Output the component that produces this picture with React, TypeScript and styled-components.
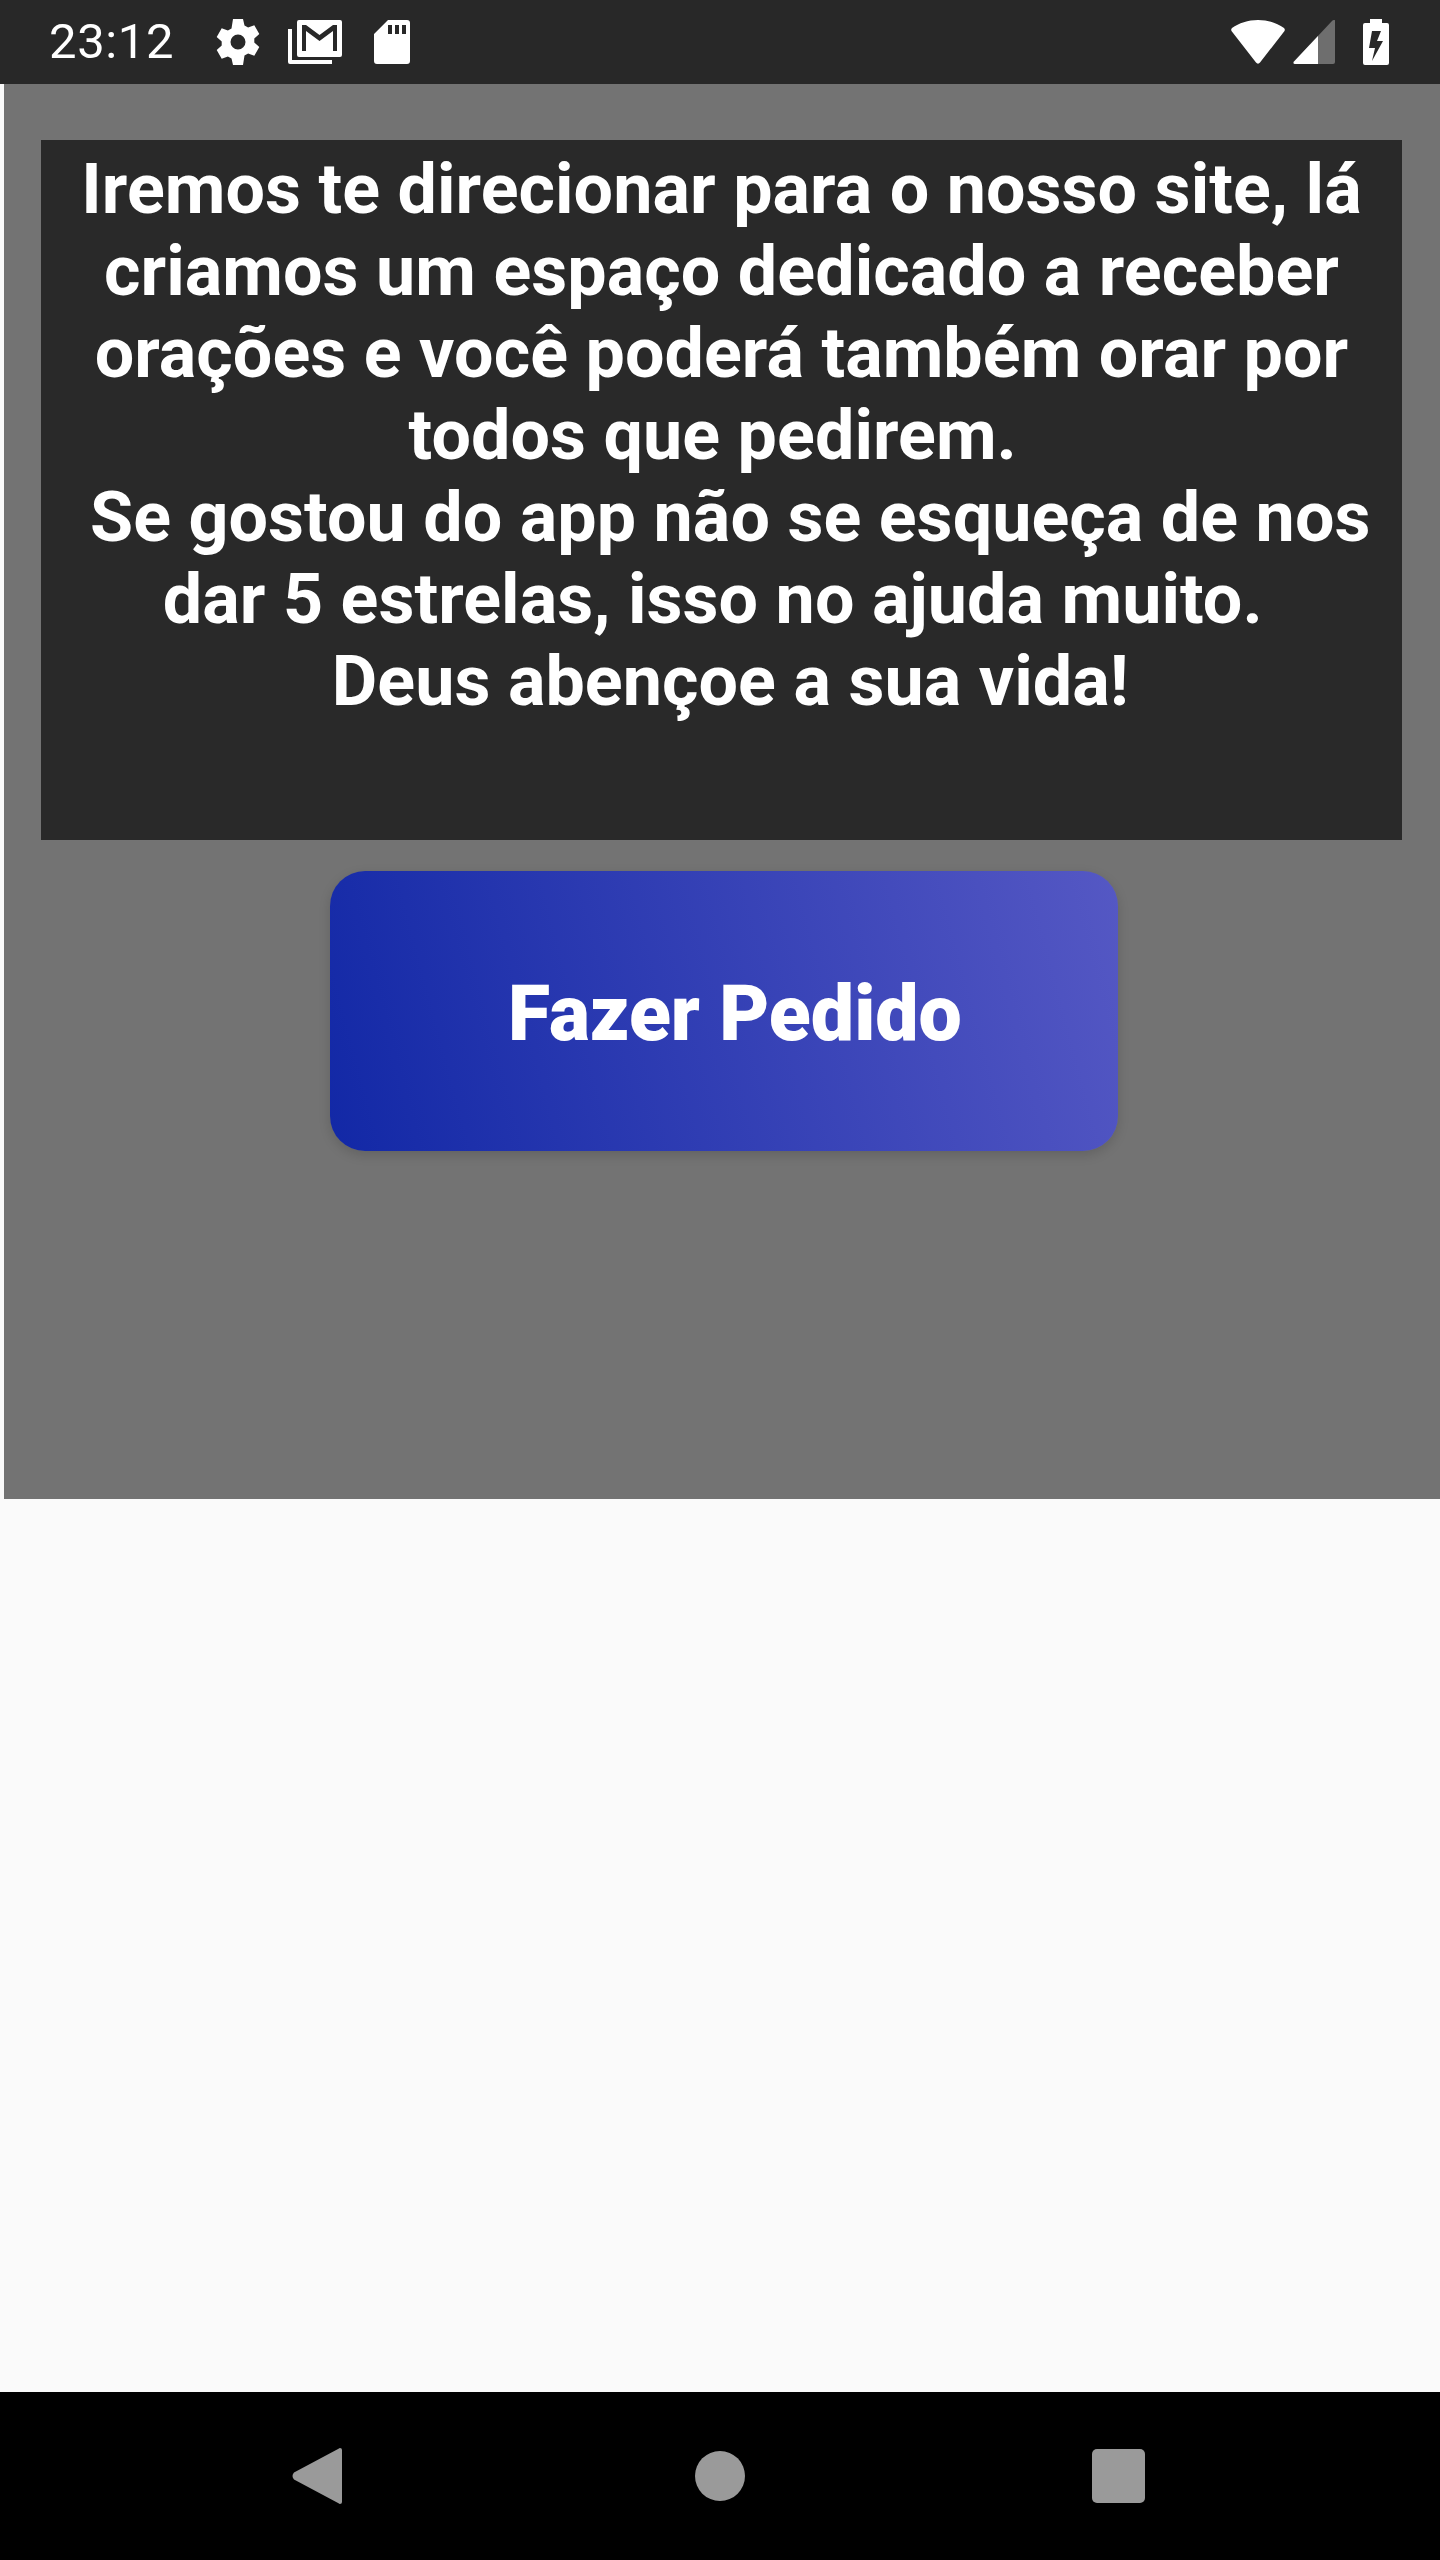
import React from "react";
import styled, { createGlobalStyle } from "styled-components";

const Global = createGlobalStyle`
  *, *::before, *::after { box-sizing: border-box; }
  html, body { margin: 0; padding: 0; background: #fafafa; }
  body { font-family: Roboto, "Liberation Sans", sans-serif; }
`;

const Screen = styled.div`
  width: 1440px;
  height: 2560px;
  display: flex;
  flex-direction: column;
  background: #fafafa;
  overflow: hidden;
`;

const StatusBar = styled.header`
  height: 84px;
  flex: none;
  background: #282828;
  display: flex;
  align-items: center;
  justify-content: space-between;
  padding: 0 51px 0 49px;
  color: #fff;
`;

const StatusGroup = styled.div`
  display: flex;
  align-items: center;
`;

const Clock = styled.span`
  font-size: 49px;
  line-height: 84px;
  width: 167px;
  flex: none;
  letter-spacing: 0.6px;
`;

const StatusIcon = styled.svg<{ $gap?: number }>`
  display: block;
  flex: none;
  margin-left: ${(p) => p.$gap ?? 0}px;
  fill: #fff;
`;

const Main = styled.main`
  flex: none;
  height: 1415px;
  margin-left: 4px;
  background: #737373;
  padding: 56px 38px 0 37px;
  display: flex;
  flex-direction: column;
`;

const Message = styled.div`
  height: 700px;
  flex: none;
  background: #292929;
  color: #fff;
  font-size: 70px;
  line-height: 82px;
  font-weight: 700;
  letter-spacing: 0.06px;
  text-align: center;
  padding-top: 8px;
`;

const Line = styled.div`
  white-space: pre;
`;

const PrimaryButton = styled.button`
  margin: 31px 0 0 289px;
  width: 788px;
  height: 280px;
  flex: none;
  border: 0;
  border-radius: 35px;
  background: linear-gradient(75deg, #1228a6 0%, #5558c4 100%);
  box-shadow: 0 4px 12px rgba(0, 0, 0, 0.15);
  color: #fff;
  font-family: Roboto, sans-serif;
  font-size: 77px;
  font-weight: 900;
  padding: 6px 0 0 22px;
`;

const Spacer = styled.div`
  flex: 1;
  background: #fafafa;
`;

const NavBar = styled.nav`
  height: 168px;
  flex: none;
  background: #000;
  display: flex;
  align-items: center;
  padding-left: 292px;
`;

const NavIcon = styled.svg<{ $gap?: number }>`
  display: block;
  flex: none;
  margin-left: ${(p) => p.$gap ?? 0}px;
  fill: #9a9a9a;
`;

const lines = [
  "Iremos te direcionar para o nosso site, lá",
  "criamos um espaço dedicado a receber",
  "orações e você poderá também orar por",
  "todos que pedirem. ",
  " Se gostou do app não se esqueça de nos",
  "dar 5 estrelas, isso no ajuda muito. ",
  " Deus abençoe a sua vida!",
];

export default function App() {
  return (
    <Screen>
      <Global />
      <StatusBar>
        <StatusGroup>
          <Clock>23:12</Clock>
          <StatusIcon width="44" height="46" viewBox="0 0 44 46">
            <path
              fillRule="evenodd"
              d="M17 0h10l1.5 6.5 3.6 2 6.2-2.2 5 8.6-5 4.5v4.2l5 4.5-5 8.6-6.2-2.2-3.6 2L27 46H17l-1.5-6.5-3.6-2-6.2 2.2-5-8.6 5-4.5v-4.2l-5-4.5 5-8.6 6.200 2.2 3.6-2zM22 15.500a7.500 7.500 0 1 0 0 15 7.500 7.500 0 0 0 0-15z"
            />
          </StatusIcon>
          <StatusIcon $gap={28} width="54" height="44" viewBox="0 0 54 44">
            <path d="M0 9h4v31h40v4H2a2 2 0 0 1-2-2z" />
            <path
              fillRule="evenodd"
              d="M11 0h41a2 2 0 0 1 2 2v33a2 2 0 0 1-2 2H11a2 2 0 0 1-2-2V2a2 2 0 0 1 2-2zm3 5v26h4V11l13.500 10L45 11v20h4V5h-4L31.500 15 18 5z"
            />
          </StatusIcon>
          <StatusIcon $gap={32} width="36" height="44" viewBox="0 0 36 44">
            <path
              fillRule="evenodd"
              d="M14 0h19a3 3 0 0 1 3 3v38a3 3 0 0 1-3 3H3a3 3 0 0 1-3-3V14zm0 5v9h4V5zm7 0v9h4V5zm7 0v9h4V5z"
            />
          </StatusIcon>
        </StatusGroup>
        <StatusGroup>
          <StatusIcon width="54" height="44" viewBox="0 0 54 44">
            <path d="M27 0c10 0 19 3 26 8 1 1 1 2 .500 3L29 42.500c-1 1.500-3 1.500-4 0L.500 11C0 10 0 9 1 8 8 3 17 0 27 0z" />
          </StatusIcon>
          <StatusIcon $gap={8} width="43" height="44" viewBox="0 0 43 44">
            <path d="M42 .5V42a2 2 0 0 1-2 2H2c-1.500 0-2-1-1-2.500L39 1c1-1 3-1.500 3-.5z" fill="#6e6e6e" />
            <path d="M25 16v28H2c-1.500 0-2-1-1-2.500z" />
          </StatusIcon>
          <StatusIcon $gap={27} width="26" height="46" viewBox="0 0 26 46">
            <path
              fillRule="evenodd"
              d="M7 0h12v4h5a2 2 0 0 1 2 2v38a2 2 0 0 1-2 2H2a2 2 0 0 1-2-2V6a2 2 0 0 1 2-2h5zm2 12-3 17h6l-3 13 11-20h-6l4-10z"
            />
          </StatusIcon>
        </StatusGroup>
      </StatusBar>
      <Main>
        <Message>
          {lines.map((l) => (
            <Line key={l}>{l}</Line>
          ))}
        </Message>
        <PrimaryButton>Fazer Pedido</PrimaryButton>
      </Main>
      <Spacer />
      <NavBar>
        <NavIcon width="50" height="56" viewBox="0 0 50 56">
          <path d="M48 0a2 2 0 0 1 2 2v52a2 2 0 0 1-2 2c-.6 0-1-.3-1.500-.8L2 31.500c-2-2-2-5 0-7L46.500.8c.5-.5 1-.8 1.500-.8z" />
        </NavIcon>
        <NavIcon $gap={353} width="50" height="50" viewBox="0 0 50 50">
          <circle cx="25" cy="25" r="25" />
        </NavIcon>
        <NavIcon $gap={347} width="53" height="54" viewBox="0 0 53 54">
          <rect width="53" height="54" rx="5" />
        </NavIcon>
      </NavBar>
    </Screen>
  );
}
